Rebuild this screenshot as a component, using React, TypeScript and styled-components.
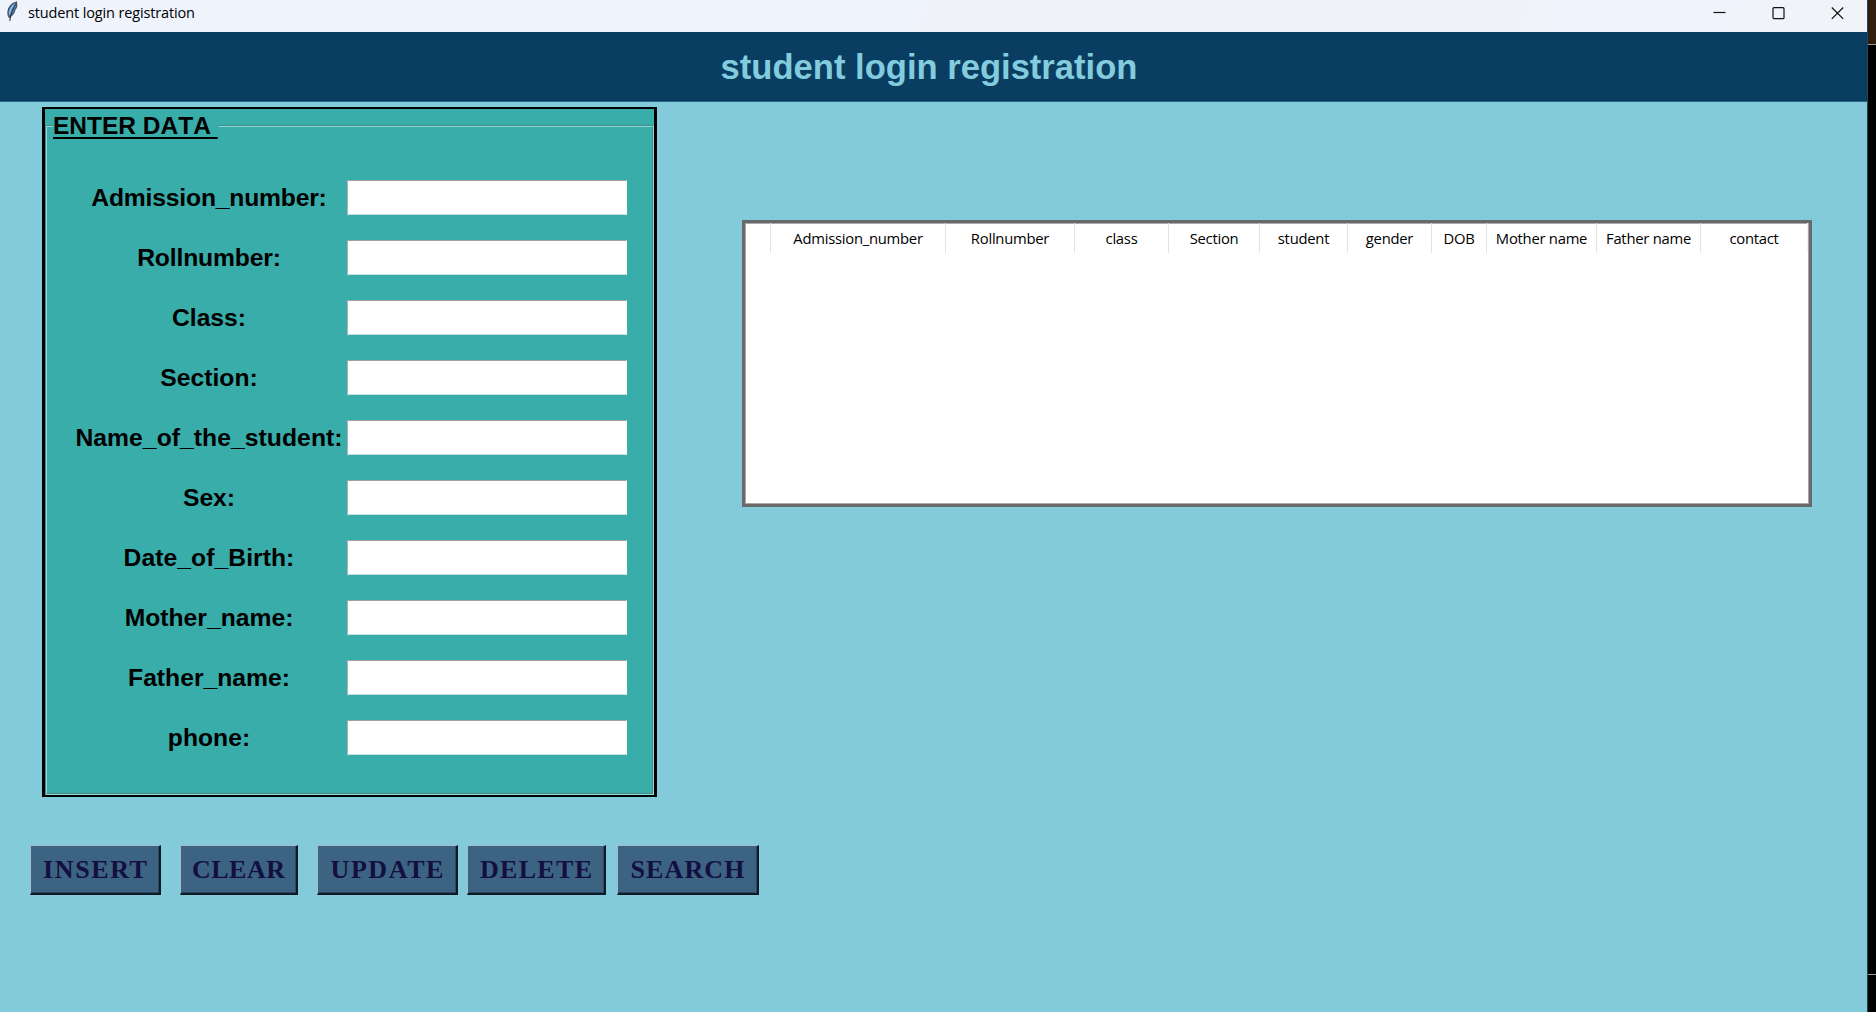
import React from "react";
import styled, { createGlobalStyle } from "styled-components";

const Global = createGlobalStyle`
  * { box-sizing: border-box; }
  html, body { margin: 0; padding: 0; overflow: hidden; }
  body { background: #000; font-family: "Liberation Sans", Arial, sans-serif; }
`;

const Desktop = styled.div`
  display: flex;
  width: 1876px;
  height: 1012px;
  background: #000;
`;

const Window = styled.div`
  display: flex;
  flex-direction: column;
  flex: 1;
  background: #83cbdb;
`;

const Backdrop = styled.div`
  display: flex;
  flex-direction: column;
  width: 9px;
  border-left: 1px solid #234450;
`;

const BackdropPart = styled.div<{ $h: number; $bg: string }>`
  height: ${(p) => p.$h}px;
  background: ${(p) => p.$bg};
`;

const TitleBar = styled.div`
  display: flex;
  align-items: flex-start;
  height: 32px;
  background: linear-gradient(115deg, #eff3fc 0 49%, #f0f2f7 50% 78%, #f0f3fb 84% 92%, #f0f3f7 95%);
`;

const TitleIcon = styled.svg`
  width: 14px;
  height: 22px;
  margin: 1px 0 0 5px;
`;

const TitleText = styled.div`
  flex: 1;
  margin-left: 9px;
  font: 14.5px/26px "Open Sans", "Noto Sans", sans-serif;
  letter-spacing: -0.14px;
  color: #000;
`;

const Controls = styled.div`
  display: flex;
  gap: 46px;
  padding: 7px 23px 0 0;
`;

const ControlIcon = styled.svg`
  width: 13px;
  height: 13px;
  fill: none;
  stroke: #111;
  stroke-width: 1.2;
`;

const Header = styled.h1`
  display: flex;
  align-items: center;
  justify-content: center;
  height: 70px;
  margin: 0;
  padding: 1px 9px 0 0;
  background: #0a3d62;
  border-bottom: 1px solid #2a6482;
  color: #82ccdd;
  font: bold 34.6px/40px "Liberation Sans", Arial, sans-serif;
  font-kerning: none;
`;

const Main = styled.div`
  display: flex;
  align-items: flex-start;
  gap: 85px;
  padding: 5px 0 0 42px;
`;

const Panel = styled.div`
  display: flex;
  width: 615px;
  height: 690px;
  padding-top: 3px;
  background: #38ada9;
  border: solid #000;
  border-width: 2px 3px 2px 3px;
`;

const Fieldset = styled.fieldset`
  flex: 1;
  min-width: 0;
  margin: 0;
  padding: 40px 0 0 24px;
  border: 2px groove #86dcd8;
`;

const Legend = styled.legend`
  margin-left: -18px;
  padding: 0 1px 0 0;
  font: bold 24.5px/28px "Liberation Sans", Arial, sans-serif;
  font-kerning: none;
  white-space: pre;
  text-decoration: underline;
  text-decoration-thickness: 2px;
  text-underline-offset: 3px;
  color: #000;
`;

const Fields = styled.div`
  display: flex;
  flex-direction: column;
  gap: 25px;
`;

const Field = styled.label`
  display: grid;
  grid-template-columns: 276px 280px;
  align-items: center;
  height: 35px;
`;

const FieldName = styled.span<{ $spacing: number }>`
  text-align: center;
  font: bold 24.7px/30px "Liberation Sans", Arial, sans-serif;
  font-kerning: none;
  letter-spacing: ${(p) => p.$spacing}px;
  color: #000;
`;

const Entry = styled.input`
  width: 280px;
  height: 35px;
  padding: 0 4px;
  border: 1px solid;
  border-color: #a0a0a0 #fff #c4e4e3 #b0b0b0;
  border-radius: 0;
  outline: none;
  background: #fff;
  font-size: 20px;
`;

const TableFrame = styled.div`
  width: 1070px;
  height: 287px;
  margin-top: 113px;
  border: 3px solid #69696c;
  background: #fff;
  box-shadow: inset 0 0 0 1px #a9a9ac;
`;

const TableHead = styled.div`
  display: grid;
  grid-template-columns: 26px 175px 129px 94px 91px 88px 84px 55px 110px 104px 107px;
  height: 30px;
`;

const HeadCell = styled.div`
  border-right: 1px solid #e3e3e3;
  text-align: center;
  white-space: nowrap;
  font: 14.8px/30px "Open Sans", "Noto Sans", sans-serif;
  letter-spacing: -0.25px;
  color: #000;

  &:last-child {
    border-right-color: #f2f2f2;
  }
`;

const Actions = styled.div`
  display: flex;
  padding: 48px 0 0 30px;
`;

const ActionButton = styled.button<{ $w: number; $gap: number; $spacing: number }>`
  width: ${(p) => p.$w}px;
  height: 50px;
  margin: 0 ${(p) => p.$gap}px 0 0;
  padding: 0;
  border: solid;
  border-width: 1px 2px 2px 1px;
  border-color: #a3bccb #0d1b26 #0d1b26 #a3bccb;
  border-radius: 0;
  background: #3c6382;
  box-shadow: inset -1px -1px 0 #2c4a62;
  color: #130f40;
  font: bold 26px/45px "Liberation Serif", "Times New Roman", serif;
  letter-spacing: ${(p) => p.$spacing}px;
  text-indent: ${(p) => p.$spacing}px;
  text-align: center;
  white-space: nowrap;
`;

const fields = [
  { name: "Admission_number:", spacing: -0.2 },
  { name: "Rollnumber:", spacing: -0.15 },
  { name: "Class:", spacing: 0 },
  { name: "Section:", spacing: 0 },
  { name: "Name_of_the_student:", spacing: 0.05 },
  { name: "Sex:", spacing: 0 },
  { name: "Date_of_Birth:", spacing: 0.05 },
  { name: "Mother_name:", spacing: 0 },
  { name: "Father_name:", spacing: 0 },
  { name: "phone:", spacing: 0 },
];

const columns = [
  "",
  "Admission_number",
  "Rollnumber",
  "class",
  "Section",
  "student",
  "gender",
  "DOB",
  "Mother name",
  "Father name",
  "contact",
];

const actions = [
  { label: "INSERT", width: 131, gap: 19, spacing: 1.6 },
  { label: "CLEAR", width: 118, gap: 19, spacing: 0.5 },
  { label: "UPDATE", width: 141, gap: 9, spacing: 1.6 },
  { label: "DELETE", width: 139, gap: 11, spacing: 1.3 },
  { label: "SEARCH", width: 142, gap: 0, spacing: 1.1 },
];

export default function App() {
  return (
    <Desktop>
      <Global />
      <Window>
        <TitleBar>
          <TitleIcon viewBox="0 0 14 22">
            <path d="M11.5 1 C7 2 3.5 6 3 10 C2.600 13 3 15 4.200 16.500 C8 14 9.500 12 10 8.500 C11.500 7 12 4 11.500 1Z" fill="#4a86cc" stroke="#454a55" strokeWidth="1.100" />
            <path d="M9.500 3.500 C7 5.500 5 9 4.600 13" stroke="#9cc4ee" strokeWidth="1.300" fill="none" />
            <path d="M10.600 3 C8 8 5.500 13 4.800 20" stroke="#2b2b2b" strokeWidth="1" fill="none" />
          </TitleIcon>
          <TitleText>student login registration</TitleText>
          <Controls>
            <ControlIcon viewBox="0 0 13 13"><path d="M0.500 5.500H12.500" /></ControlIcon>
            <ControlIcon viewBox="0 0 13 13"><rect x="1" y="0.700" width="11" height="11" rx="1" /></ControlIcon>
            <ControlIcon viewBox="0 0 13 13"><path d="M0.800 0.500L12.200 11.900M12.200 0.500L0.800 11.900" /></ControlIcon>
          </Controls>
        </TitleBar>
        <Header>student login registration</Header>
        <Main>
          <Panel>
            <Fieldset>
              <Legend>{"ENTER DATA "}</Legend>
              <Fields>
                {fields.map((f) => (
                  <Field key={f.name}>
                    <FieldName $spacing={f.spacing}>{f.name}</FieldName>
                    <Entry type="text" />
                  </Field>
                ))}
              </Fields>
            </Fieldset>
          </Panel>
          <TableFrame>
            <TableHead>
              {columns.map((name, i) => (
                <HeadCell key={i}>{name}</HeadCell>
              ))}
            </TableHead>
          </TableFrame>
        </Main>
        <Actions>
          {actions.map((a) => (
            <ActionButton key={a.label} $w={a.width} $gap={a.gap} $spacing={a.spacing}>
              {a.label}
            </ActionButton>
          ))}
        </Actions>
      </Window>
      <Backdrop>
        <BackdropPart $h={44} $bg="#2f1e0d" />
        <BackdropPart $h={1} $bg="#9a9a9a" />
        <BackdropPart $h={929} $bg="#000" />
        <BackdropPart $h={1} $bg="#9a9a9a" />
      </Backdrop>
    </Desktop>
  );
}
